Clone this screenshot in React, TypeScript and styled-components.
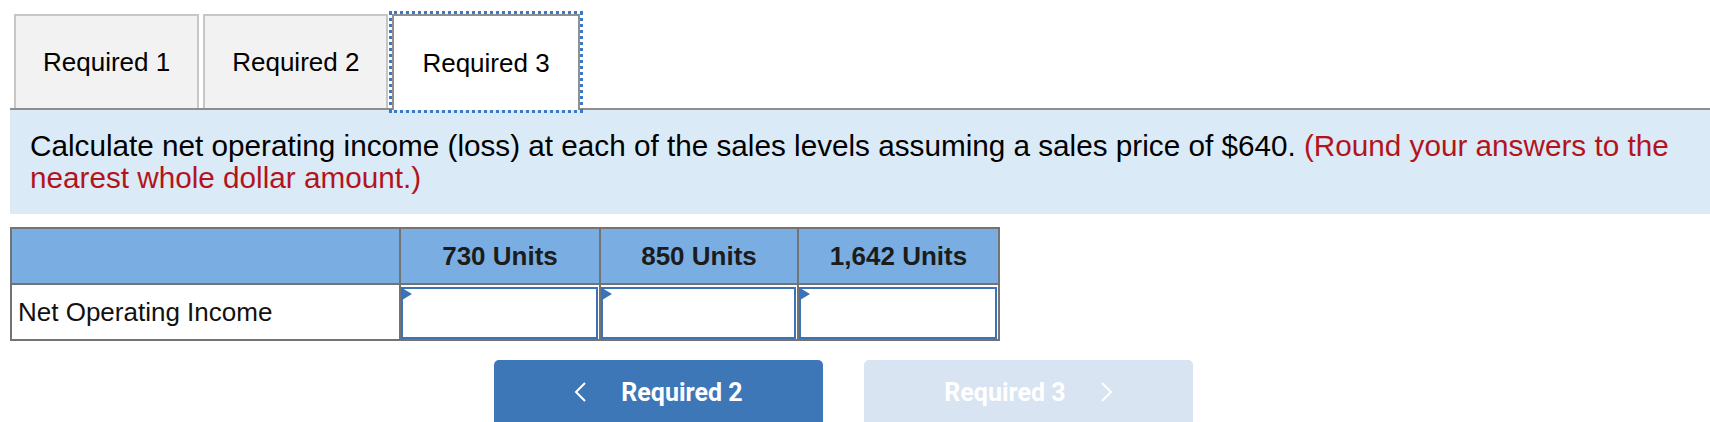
import styled, { createGlobalStyle } from "styled-components";

const GlobalStyle = createGlobalStyle`
  html, body {
    margin: 0;
    padding: 0;
    background: #ffffff;
  }
  body {
    font-family: "Liberation Sans", Arial, sans-serif;
  }
`;

const tabs = ["Required 1", "Required 2", "Required 3"];
const columns = ["730 Units", "850 Units", "1,642 Units"];

export default function App() {
  return (
    <Page>
      <GlobalStyle />
      <TabBar>
        {tabs.map((t, i) => (
          <Tab key={t} $active={i === 2}>
            {t}
          </Tab>
        ))}
      </TabBar>

      <Instructions>
        Calculate net operating income (loss) at each of the sales levels
        assuming a sales price of $640.{" "}
        <Hint>(Round your answers to the nearest whole dollar amount.)</Hint>
      </Instructions>

      <Grid>
        <colgroup>
          <col style={{ width: 389 }} />
          <col style={{ width: 200 }} />
          <col style={{ width: 198 }} />
          <col style={{ width: 201 }} />
        </colgroup>
        <thead>
          <tr>
            <HeadCell />
            {columns.map((c) => (
              <HeadCell key={c}>{c}</HeadCell>
            ))}
          </tr>
        </thead>
        <tbody>
          <tr>
            <LabelCell>Net Operating Income</LabelCell>
            {columns.map((c) => (
              <InputCell key={c}>
                <AnswerInput type="text" />
                <Marker />
              </InputCell>
            ))}
          </tr>
        </tbody>
      </Grid>

      <NavRow>
        <NavButton>
          <Chevron viewBox="0 0 12 20">
            <polyline points="11,1 2,10 11,19" />
          </Chevron>
          Required 2
        </NavButton>
        <NavButton $disabled>
          Required 3
          <Chevron viewBox="0 0 12 20">
            <polyline points="1,1 10,10 1,19" />
          </Chevron>
        </NavButton>
      </NavRow>
    </Page>
  );
}

const Page = styled.div`
  width: 1710px;
  padding-left: 10px;
  box-sizing: border-box;
`;

const TabBar = styled.div`
  display: flex;
  align-items: flex-end;
  gap: 4px;
  padding: 14px 0 0 4px;
  border-bottom: 2px solid #8e8e8e;
`;

const Tab = styled.div<{ $active?: boolean }>`
  display: flex;
  align-items: center;
  justify-content: center;
  box-sizing: border-box;
  height: ${(p) => (p.$active ? "96px" : "94px")};
  padding: 0 ${(p) => (p.$active ? "28px" : "27px")};
  margin-bottom: ${(p) => (p.$active ? "-2px" : "0")};
  border: 2px solid ${(p) => (p.$active ? "#909090" : "#c6c6c6")};
  border-bottom: none;
  background: ${(p) => (p.$active ? "#ffffff" : "#f2f2f2")};
  outline: ${(p) => (p.$active ? "3px dotted #3d78c4" : "none")};
  outline-offset: 0;
  font-size: 26px;
  color: #000;
`;

const Instructions = styled.p`
  margin: 0;
  padding: 20px 20px 21px 20px;
  background: #dbeaf7;
  font-size: 29.7px;
  line-height: 31.5px;
  color: #000;
`;

const Hint = styled.span`
  color: #b3141c;
`;

const Grid = styled.table`
  margin-top: 13px;
  width: 989px;
  border-collapse: collapse;
  table-layout: fixed;
  font-family: "Liberation Sans", Arial, sans-serif;
  font-size: 26px;
`;

const HeadCell = styled.th`
  height: 54px;
  padding: 0;
  background: #7aaee2;
  border: 2px solid #737373;
  font-weight: 700;
  color: #1c1c1c;
  text-align: center;
`;

const LabelCell = styled.td`
  height: 53px;
  padding: 0 6px;
  border: 2px solid #737373;
  color: #111;
  text-align: left;
`;

const InputCell = styled.td`
  position: relative;
  height: 53px;
  padding: 1px 1px 0 0;
  border: 2px solid #737373;
`;

const AnswerInput = styled.input`
  display: block;
  box-sizing: border-box;
  width: 100%;
  height: 52px;
  margin: 0;
  border: 2.5px solid #3b73b6;
  background: #fff;
  outline: none;
`;

const Marker = styled.span`
  position: absolute;
  top: 3px;
  left: 1px;
  width: 0;
  height: 0;
  border-top: 6px solid transparent;
  border-bottom: 6px solid transparent;
  border-left: 10px solid #3b73b6;
`;

const NavRow = styled.div`
  display: flex;
  justify-content: center;
  gap: 41px;
  margin-top: 19px;
  padding-right: 33px;
`;

const NavButton = styled.button<{ $disabled?: boolean }>`
  display: flex;
  align-items: center;
  justify-content: center;
  gap: 35px;
  width: 329px;
  height: 70px;
  padding: 0 0 6px;
  border: none;
  border-radius: 5px;
  background: ${(p) => (p.$disabled ? "#d8e4f2" : "#3d77b7")};
  color: #fff;
  font-family: Roboto, "Liberation Sans", sans-serif;
  font-weight: 700;
  font-size: 25px;
  cursor: ${(p) => (p.$disabled ? "default" : "pointer")};
`;

const Chevron = styled.svg`
  width: 12px;
  height: 20px;
  fill: none;
  stroke: #fff;
  stroke-width: 2;
`;
